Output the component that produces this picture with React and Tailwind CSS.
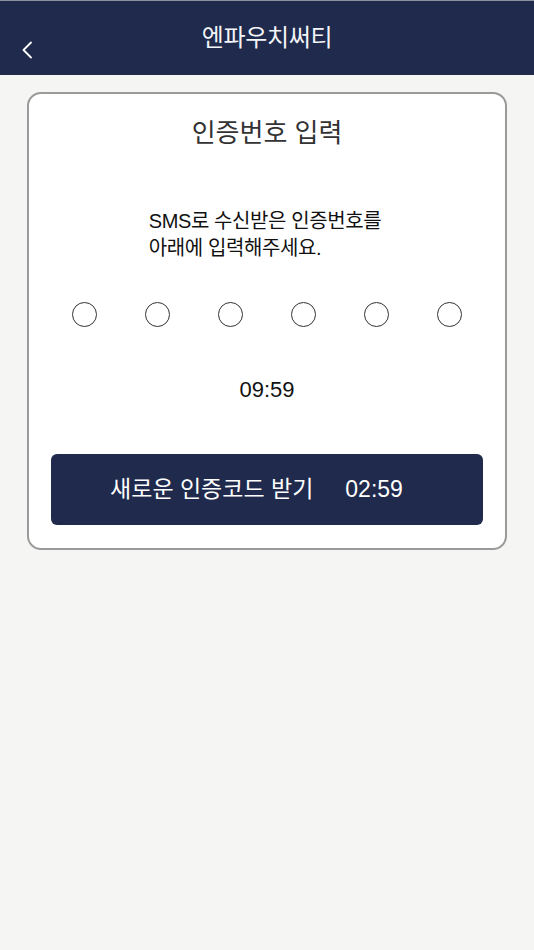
import { useState } from 'react';

const FONT = { fontFamily: '"Liberation Sans", "Noto Sans CJK KR", "Noto Sans", sans-serif' };

function Header() {
  return (
    <header className="relative h-[75px] bg-[#1f2a4c] border-t border-[#8a8f9c] flex items-center justify-center">
      <button className="absolute left-[16px] top-[36px] w-[22px] h-[26px] flex items-center justify-center">
        <svg width="12" height="18" viewBox="0 0 12 18" fill="none">
          <path d="M10 1.5 L2.5 9 L10 16.5" stroke="#ffffff" strokeWidth="1.8" strokeLinecap="round" strokeLinejoin="round" />
        </svg>
      </button>
      <h1 className="text-[#f4f5f8] text-[24px] font-normal tracking-[-0.3px] mt-[-1px]">엔파우치써티</h1>
    </header>
  );
}

export default function App() {
  const [code] = useState(['', '', '', '', '', '']);

  return (
    <div className="min-h-[950px] bg-[#f5f5f3]" style={FONT}>
      <Header />
      <main className="px-[27px] pt-[17px]">
        <section className="bg-white border-2 border-[#9a9a9a] rounded-[14px] px-[22px] pt-[22px] pb-[23px]">
          <h2 className="text-center text-[26px] leading-[34px] text-[#333333]">인증번호 입력</h2>

          <div className="mt-[58px] flex justify-center">
            <p className="text-[20px] leading-[27px] text-[#111111] tracking-[-0.4px] ml-[-4px]">
              SMS로 수신받은 인증번호를
              <br />
              아래에 입력해주세요.
            </p>
          </div>

          <div className="mt-[40px] grid grid-cols-6 mx-[-3px]">
            {code.map((c, i) => (
              <div key={i} className="flex justify-center">
                <div className="w-[25px] h-[25px] rounded-full border-[1.5px] border-[#333333]">{c}</div>
              </div>
            ))}
          </div>

          <p className="mt-[49px] text-center text-[22px] leading-[28px] text-[#111111]">09:59</p>

          <button className="mt-[50px] w-full h-[71px] bg-[#1f2a4c] rounded-[6px] flex items-center justify-center gap-[32px] pr-[21px] text-white text-[23px]">
            <span>새로운 인증코드 받기</span>
            <span>02:59</span>
          </button>
        </section>
      </main>
    </div>
  );
}
